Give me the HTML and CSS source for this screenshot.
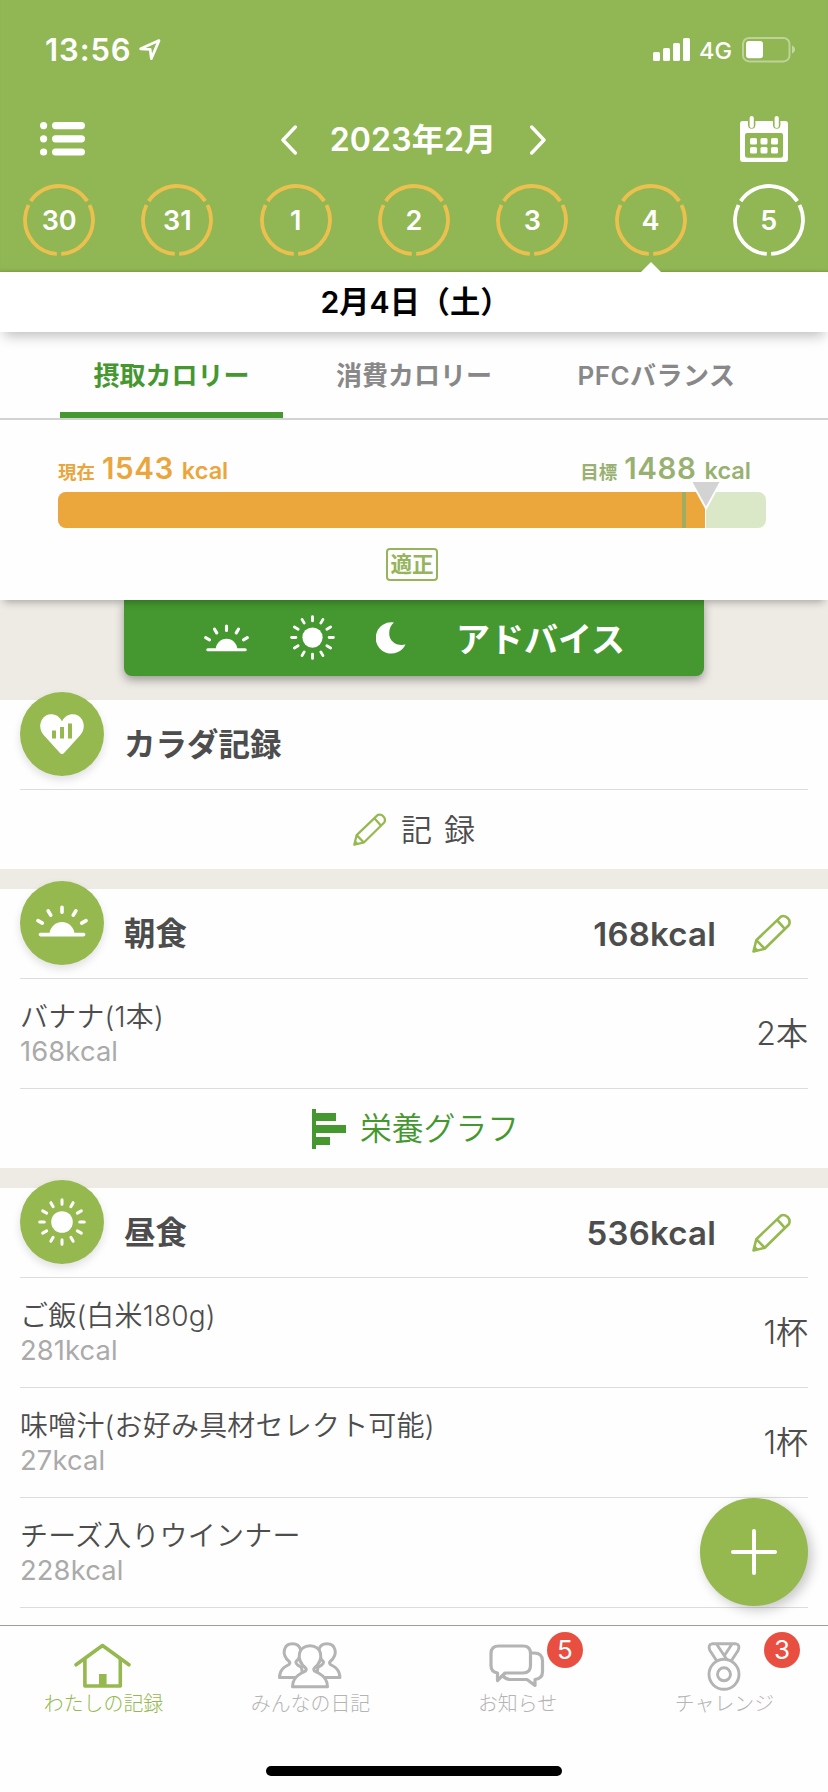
FILE: index.html
```html
<!DOCTYPE html>
<html lang="ja">
<head>
<meta charset="utf-8">
<title>わたしの記録</title>
<link rel="stylesheet" href="styles.css">
</head>
<body>
<svg class="defs" width="0" height="0" aria-hidden="true">
  <symbol id="ring" viewBox="0 0 72 72">
    <circle cx="36" cy="36" r="34" fill="none" stroke="currentColor" stroke-width="3.8" pathLength="360" stroke-dasharray="112.5 7.5" transform="rotate(93.75 36 36)"/>
  </symbol>
  <symbol id="pencil" viewBox="0 0 40 40">
    <g fill="none" stroke="currentColor" stroke-width="2.6" stroke-linejoin="round">
      <path d="M1.5 38.5 L4.3 27.2 L29.2 3.4 A6.4 6.4 0 0 1 37 12 L12.8 35.8 Z"/>
      <path d="M4.3 27.2 L12.8 35.8 M25.2 7.4 L32.8 15.9"/>
    </g>
    <path d="M1 39 L2.2 32.5 L7 37.6 Z" fill="currentColor"/>
  </symbol>
  <symbol id="sunrise" viewBox="0 0 52 32">
    <g stroke="currentColor" stroke-width="3.6" stroke-linecap="round" fill="none">
      <path d="M4.4 29.6H47.6M26 2.3V7.2M12.2 5.8L14.7 10.1M39.8 5.8L37.3 10.1M2 15.6L6.3 18.1M50 15.6L45.7 18.1"/>
    </g>
    <path d="M13.5 29.5a12.5 12.5 0 0 1 25 0z" fill="currentColor"/>
  </symbol>
  <symbol id="sun" viewBox="0 0 48 48">
    <circle cx="24" cy="24" r="10.8" fill="currentColor"/>
    <g stroke="currentColor" stroke-width="3" stroke-linecap="round">
      <path d="M24 1.7V6.3M24 41.7V46.3M1.7 24H6.3M41.7 24H46.3"/>
      <path d="M24 1.7V6.3M24 41.7V46.3M1.7 24H6.3M41.7 24H46.3" transform="rotate(30 24 24)"/>
      <path d="M24 1.7V6.3M24 41.7V46.3M1.7 24H6.3M41.7 24H46.3" transform="rotate(60 24 24)"/>
    </g>
  </symbol>
</svg>

<div class="screen">
  <header class="header">
    <div class="status">
      <span class="clock">13:56</span>
      <svg class="loc" width="22" height="22" viewBox="0 0 22 22"><path d="M1.6 9.8L20 1.6L12.3 19.6L11.2 10.4Z" fill="none" stroke="#fff" stroke-width="2.7" stroke-linejoin="round"/></svg>
      <svg class="signal" width="38" height="24" viewBox="0 0 38 24" fill="#fff"><rect y="14" width="7" height="9" rx="1.6"/><rect x="10" y="10" width="7" height="13" rx="1.6"/><rect x="20" y="5" width="7" height="18" rx="1.6"/><rect x="30" width="7" height="23" rx="1.6"/></svg>
      <span class="network">4G</span>
      <svg class="battery" width="54" height="26" viewBox="0 0 54 26"><rect x="1" y="1" width="46.5" height="23.4" rx="6" fill="none" stroke="#fff" stroke-opacity=".4" stroke-width="2"/><rect x="4" y="4" width="17" height="17.3" rx="3" fill="#fff"/><path d="M50 8.5v8c4-1.500 4-6.500 0-8z" fill="#fff" fill-opacity=".45"/></svg>
    </div>
    <div class="month">
      <svg class="menu" width="46" height="34" viewBox="0 0 46 34" fill="#fff"><circle cx="3.6" cy="3.6" r="3.6"/><circle cx="3.6" cy="16.8" r="3.6"/><circle cx="3.6" cy="30" r="3.6"/><rect x="12" y="0" width="33" height="7.2" rx="3.6"/><rect x="12" y="13.2" width="33" height="7.2" rx="3.6"/><rect x="12" y="26.4" width="33" height="7.2" rx="3.6"/></svg>
      <div class="month-pick">
        <svg width="18" height="30" viewBox="0 0 18 30"><path d="M15.300 2L3 15L15.300 28" fill="none" stroke="#fff" stroke-width="3.4" stroke-linecap="round" stroke-linejoin="round"/></svg>
        <span class="month-name">2023年2月</span>
        <svg width="18" height="30" viewBox="0 0 18 30"><path d="M2.700 2L15 15L2.700 28" fill="none" stroke="#fff" stroke-width="3.4" stroke-linecap="round" stroke-linejoin="round"/></svg>
      </div>
      <svg class="calendar" width="48" height="46" viewBox="0 0 48 46" fill="#fff">
        <path fill-rule="evenodd" d="M2.500 5H8V9a3.700 3.700 0 0 0 7.400 0V5H33V9a3.700 3.700 0 0 0 7.400 0V5H45.500Q48 5 48 8V43Q48 46 45 46H3Q0 46 0 43V8Q0 5 2.500 5ZM7 17Q5 17 5 19V39.500Q5 41.800 7.300 41.800H40.700Q43 41.800 43 39.500V19Q43 17 41 17Z"/>
        <rect x="9.600" y="0" width="4.200" height="12" rx="2.100"/><rect x="34.600" y="0" width="4.200" height="12" rx="2.100"/>
        <g><rect x="10" y="22" width="7" height="6.600" rx="1.500"/><rect x="20.500" y="22" width="7" height="6.600" rx="1.500"/><rect x="31" y="22" width="7" height="6.600" rx="1.500"/><rect x="10" y="31" width="7" height="6.600" rx="1.500"/><rect x="20.500" y="31" width="7" height="6.600" rx="1.500"/><rect x="31" y="31" width="7" height="6.600" rx="1.500"/></g>
      </svg>
    </div>
    <div class="days">
      <div class="day"><svg class="ring"><use href="#ring"/></svg><span>30</span></div>
      <div class="day"><svg class="ring"><use href="#ring"/></svg><span>31</span></div>
      <div class="day"><svg class="ring"><use href="#ring"/></svg><span>1</span></div>
      <div class="day"><svg class="ring"><use href="#ring"/></svg><span>2</span></div>
      <div class="day"><svg class="ring"><use href="#ring"/></svg><span>3</span></div>
      <div class="day selected"><svg class="ring"><use href="#ring"/></svg><span>4</span></div>
      <div class="day empty"><svg class="ring"><use href="#ring"/></svg><span>5</span></div>
    </div>
  </header>

  <div class="date-bar"><span>2月4日（土）</span></div>

  <section class="summary">
    <div class="tabs">
      <div class="tab active">摂取カロリー</div>
      <div class="tab">消費カロリー</div>
      <div class="tab pfc">PFCバランス</div>
    </div>
    <div class="meter">
      <div class="meter-labels">
        <div class="now"><small>現在</small><b>1543</b><i>kcal</i></div>
        <div class="goal"><small>目標</small><b>1488</b><i>kcal</i></div>
      </div>
      <div class="bar">
        <div class="bar-fill"></div>
        <div class="bar-goal"></div>
        <svg class="bar-pointer" width="32" height="30" viewBox="0 0 32 30"><path d="M.5 0H31.500L16 28.500Z" fill="#fff"/><path d="M2.500 0H29.500L16 24.500Z" fill="#d3d3d3"/></svg>
      </div>
    </div>
    <div class="verdict">適正</div>
  </section>

  <main class="feed">
    <div class="advice">
      <svg class="adv-sunrise"><use href="#sunrise"/></svg>
      <svg class="adv-sun"><use href="#sun"/></svg>
      <svg class="adv-moon" viewBox="0 0 30 32"><path d="M18 .6A15.600 15.600 0 1 0 29.500 22.500C21 24.500 13.200 19.800 13.200 11.500C13.200 6.500 15 3 18 .6Z" fill="#fff"/></svg>
      <span>アドバイス</span>
    </div>

    <section class="card">
      <div class="card-head">
        <div class="disc"><svg width="44" height="41" viewBox="0 0 44 41"><path d="M22 7.500C18.500-1 6.500-2.500 2 5.500C-1.500 12 .5 18 5 22.500L19.500 38.500Q22 41.500 24.500 38.500L39 22.500C43.500 18 45.500 12 42 5.500C37.500-2.500 25.500-1 22 7.500Z" fill="#fff"/><path d="M12 16.500h4V24.500h-4zM20 13h4V24.500h-4zM28 9.500h4V24.500h-4z" fill="#95b94f"/></svg></div>
        <h2>カラダ記録</h2>
      </div>
      <div class="action record"><svg class="pencil-sm"><use href="#pencil"/></svg><span>記録</span></div>
    </section>

    <section class="card">
      <div class="card-head">
        <div class="disc"><svg class="disc-sunrise"><use href="#sunrise"/></svg></div>
        <h2>朝食</h2>
        <span class="total">168kcal</span>
        <svg class="pencil"><use href="#pencil"/></svg>
      </div>
      <div class="item">
        <div><p class="name">バナナ(1本)</p><p class="kcal">168kcal</p></div>
        <span class="qty">2本</span>
      </div>
      <div class="action graph"><svg width="34" height="40" viewBox="0 0 34 40" fill="#45982f"><path d="M0 0H4V4H24V12H4V16H34V24H4V28H18V36H4V40H0Z"/></svg><span>栄養グラフ</span></div>
    </section>

    <section class="card last">
      <div class="card-head">
        <div class="disc"><svg class="disc-sun"><use href="#sun"/></svg></div>
        <h2>昼食</h2>
        <span class="total">536kcal</span>
        <svg class="pencil"><use href="#pencil"/></svg>
      </div>
      <div class="item">
        <div><p class="name">ご飯(白米180g)</p><p class="kcal">281kcal</p></div>
        <span class="qty">1杯</span>
      </div>
      <div class="item">
        <div><p class="name">味噌汁(お好み具材セレクト可能)</p><p class="kcal">27kcal</p></div>
        <span class="qty">1杯</span>
      </div>
      <div class="item">
        <div><p class="name">チーズ入りウインナー</p><p class="kcal">228kcal</p></div>
      </div>
    </section>
  </main>

  <div class="fab"><svg width="46" height="46" viewBox="0 0 46 46"><path d="M23 2V44M2 23H44" stroke="#fff" stroke-width="4" stroke-linecap="round"/></svg></div>

  <nav class="nav">
    <div class="nav-item current">
      <svg width="66" height="50" viewBox="0 0 66 50"><g fill="none" stroke="currentColor" stroke-width="3.6" stroke-linejoin="round" stroke-linecap="round"><path d="M6 23.800L32.500 4.500L59 23.800"/><path d="M14.900 18V45H50.300V18"/></g><path d="M29 33h7.600v12H29z" fill="currentColor"/></svg>
      <span>わたしの記録</span>
    </div>
    <div class="nav-item">
      <svg width="66" height="50" viewBox="0 0 66 50"><g fill="#fff" stroke="currentColor" stroke-width="3" stroke-linejoin="round"><path d="M12.200 20.500C3.500 13 7 2.800 15.500 2.800S27.500 13 19 20.500C18 23 22 25 24.500 26.500L26 36.500H2.500C2.500 29 7 26 12 23.500Q13.500 22 12.200 20.500Z"/><path d="M53.200 20.500C61.900 13 58.400 2.800 49.900 2.800S37.900 13 46.400 20.500C47.400 23 43.400 25 40.900 26.500L39.400 36.500H62.900C62.900 29 58.400 26 53.400 23.500Q51.900 22 53.200 20.500Z"/><path d="M28.500 27C18 18 21.500 4.800 33 4.800S48 18 37.500 27C35.500 29.500 38 30.500 41.500 32Q50.500 37 50.500 45.700H15.500Q15.500 37 24.500 32C28 30.500 30.500 29.500 28.500 27Z"/></g></svg>
      <span>みんなの日記</span>
    </div>
    <div class="nav-item">
      <svg width="66" height="50" viewBox="0 0 66 50"><g fill="#fff" stroke="currentColor" stroke-width="3.2" stroke-linejoin="round"><path d="M30 12H50Q58.500 12 58.500 20V31Q58.500 37.500 51 38.500V44.500L43 38.500H26Q21 38 19 35Z"/><path d="M15 5H39Q46.500 5 46.500 12.500V24.500Q46.500 32 39 32H21L13.500 39.500V32Q7 31 7 24.500V12.500Q7 5 15 5Z"/></g></svg>
      <span>お知らせ</span>
      <em class="badge">5</em>
    </div>
    <div class="nav-item">
      <svg width="66" height="50" viewBox="0 0 66 50"><g fill="none" stroke="currentColor" stroke-width="2.9" stroke-linejoin="round"><path d="M25.500 19.500L18.900 9.500Q16.500 3.200 21.500 2.700H44.500Q49.500 3.200 47.100 9.500L40.500 19.500M25.500 3L36 18.800M41 3L33.800 14"/><circle cx="33" cy="33.300" r="15"/><circle cx="33" cy="33.300" r="6.500"/></g></svg>
      <span>チャレンジ</span>
      <em class="badge">3</em>
    </div>
  </nav>
  <div class="home-indicator"></div>
</div>
</body>
</html>
```

FILE: styles.css
```css
* { box-sizing: border-box; }
body, h2, p { margin: 0; }
body {
  width: 828px;
  height: 1792px;
  overflow: hidden;
  background: #fefefe;
  color: #4d4d4d;
  font-family: Inter, "Noto Sans CJK JP", sans-serif;
}
svg { display: block; flex: none; }
.defs { position: absolute; }
.screen {
  position: relative;
  display: flex;
  flex-direction: column;
  width: 828px;
  height: 1792px;
}

/* header */
.header { flex: none; height: 272px; background: #91b654; color: #fff; box-shadow: inset 0 -3px 3px -2px rgba(60, 80, 20, .25); }
.status { display: flex; align-items: center; height: 100px; padding: 0 32px 0 45px; }
.clock { width: 94px; padding-bottom: 2px; font-size: 31px; font-weight: 600; letter-spacing: .9px; }
.signal { margin: 0 8px 0 auto; }
.network { width: 43px; font-size: 23.5px; font-weight: 500; }
.month { display: flex; align-items: center; justify-content: space-between; height: 80px; padding: 0 40px; }
.menu { margin-top: -2px; }
.calendar { margin-top: -2px; }
.month-pick { display: flex; align-items: center; justify-content: space-between; width: 267px; }
.month-name { font-size: 32px; font-weight: 600; line-height: 40px; letter-spacing: .2px; }
.days { display: grid; grid-template-columns: repeat(7, 1fr); height: 92px; padding-top: 4px; }
.day { position: relative; display: grid; place-items: center; align-content: start; font-size: 27px; font-weight: 600; }
.day > * { grid-area: 1 / 1; }
.ring { width: 72px; height: 72px; color: #ecc04e; }
.empty .ring { color: #fff; }
.selected::after {
  content: "";
  position: absolute;
  left: 50%;
  bottom: 0;
  margin-left: -10px;
  border: 10px solid transparent;
  border-top: 0;
  border-bottom: 10px solid #fff;
}

/* date */
.date-bar {
  position: relative;
  z-index: 2;
  flex: none;
  display: flex;
  justify-content: center;
  height: 60px;
  padding-left: 3px;
  background: #fff;
  box-shadow: 0 8px 12px -4px rgba(0, 0, 0, .25);
  color: #000;
  font-size: 30.2px;
  font-weight: 600;
  line-height: 60px;
}

/* summary */
.summary {
  position: relative;
  z-index: 1;
  flex: none;
  height: 268px;
  background: #fefefe;
  box-shadow: 0 6px 8px -4px rgba(0, 0, 0, .3);
}
.tabs {
  display: flex;
  gap: 19.5px;
  height: 88px;
  padding: 0 60px;
  border-bottom: 2px solid #d2d2d2;
}
.tab { width: 223px; color: #888; font-size: 26px; font-weight: 600; line-height: 88px; text-align: center; white-space: nowrap; }
.active { border-bottom: 6px solid #45982f; color: #45982f; }
.pfc { letter-spacing: .5px; }
.meter { padding: 27px 62px 0 58px; }
.meter-labels { display: flex; justify-content: space-between; height: 45px; padding-right: 15px; line-height: 42px; }
.meter-labels small { font-size: 18.5px; font-weight: 600; margin-right: 7px; }
.meter-labels b { font-size: 29.5px; font-weight: 600; letter-spacing: .6px; margin-right: 8px; }
.meter-labels i { font-size: 23.5px; font-weight: 600; font-style: normal; }
.now { color: #eaa63c; }
.goal { color: #98b172; }
.bar { position: relative; height: 36px; border-radius: 8px; background: #dae8c8; }
.bar-fill { width: 648px; height: 36px; border-right: 1px solid #fff; border-radius: 8px 0 0 8px; background: #eba73b; }
.bar-goal { position: absolute; left: 624px; top: 0; width: 4px; height: 36px; background: #a0ac62; }
.bar-pointer { position: absolute; left: 632px; top: -10px; }
.verdict {
  width: 52px;
  height: 33px;
  margin: 20px auto 0 386px;
  border: 2px solid #95b45b;
  border-radius: 4px;
  color: #95b45b;
  font-size: 21.5px;
  font-weight: 700;
  line-height: 29px;
  text-align: center;
}

/* feed */
.feed { flex: none; display: flex; flex-direction: column; height: 1025px; overflow: hidden; background: #eeebe5; }
.advice {
  flex: none;
  display: flex;
  align-items: center;
  width: 580px;
  height: 76px;
  margin: 0 0 24px 124px;
  padding-left: 80px;
  border-radius: 0 0 8px 8px;
  background: #45982f;
  box-shadow: 0 4px 10px rgba(0, 0, 0, .35);
  color: #fff;
}
.adv-sunrise { width: 45px; height: 28px; }
.adv-sun { width: 45px; height: 45px; margin: -2px 0 0 41px; }
.adv-moon { width: 30px; height: 32px; margin-left: 41px; }
.advice span { margin-left: 50px; padding-top: 4px; font-size: 34px; font-weight: 700; line-height: 72px; }
.card { flex: none; margin-bottom: 20px; padding: 0 20px; background: #fefefe; }
.last { flex: 1 0 auto; margin-bottom: 0; height: 437px; }
.card-head { display: flex; align-items: center; height: 90px; border-bottom: 1px solid #dcdcdc; }
.disc {
  display: grid;
  place-items: center;
  align-self: flex-start;
  width: 84px;
  height: 84px;
  margin-top: -8px;
  border-radius: 50%;
  background: #95b94f;
  box-shadow: 0 4px 8px rgba(0, 0, 0, .12);
  color: #fff;
}
.disc-sunrise { width: 52px; height: 32px; margin-top: -5px; }
.disc-sun { width: 48px; height: 48px; }
h2 { margin-left: 20px; font-size: 31.5px; font-weight: 700; line-height: 88px; }
.total { margin-left: auto; font-size: 33px; font-weight: 600; letter-spacing: .2px; line-height: 88px; }
.pencil { width: 40px; height: 40px; margin: -2px 16px 0 36px; color: #95b94f; }
.pencil-sm { width: 34px; height: 34px; margin-top: -1px; color: #95b94f; }
.action { display: flex; align-items: center; height: 79px; line-height: 79px; font-size: 31px; font-weight: 350; }
.record { padding-left: 333px; letter-spacing: 12px; }
.record span { margin-left: 14px; }
.graph { padding-left: 292px; color: #45982f; }
.graph span { margin-left: 14px; font-size: 31.8px; }
.item { display: flex; align-items: center; justify-content: space-between; height: 110px; border-bottom: 1px solid #dcdcdc; }
.name { font-size: 28px; font-weight: 350; line-height: 36px; letter-spacing: .2px; }
.kcal { color: #aaa; font-size: 27.3px; line-height: 34px; letter-spacing: .15px; }
.qty { font-size: 32px; font-weight: 350; line-height: 40px; }

/* floating add button */
.fab {
  position: absolute;
  left: 700px;
  top: 1498px;
  display: grid;
  place-items: center;
  width: 108px;
  height: 108px;
  border-radius: 50%;
  background: #95b94f;
  box-shadow: 4px 4px 12px rgba(0, 0, 0, .22);
}

/* bottom navigation */
.nav { flex: none; display: grid; grid-template-columns: repeat(4, 207px); height: 141px; border-top: 1px solid #9da193; background: #fefefe; }
.nav-item { position: relative; display: flex; flex-direction: column; align-items: center; padding-top: 15px; color: #b4b4b4; font-size: 19.9px; font-weight: 300; }
.nav-item svg { margin-left: -2px; }
.nav-item span { line-height: 26px; }
.current { color: #95b94f; }
.badge { position: absolute; left: 133px; top: 6px; width: 36px; height: 36px; border-radius: 50%; background: #e94f40; color: #fff; font-size: 26px; font-style: normal; font-weight: 400; line-height: 36px; text-align: center; }
.nav-item:last-child .badge { left: 143px; }
.home-indicator { width: 296px; height: 10px; margin: 0 auto; border-radius: 5px; background: #000; }
```
